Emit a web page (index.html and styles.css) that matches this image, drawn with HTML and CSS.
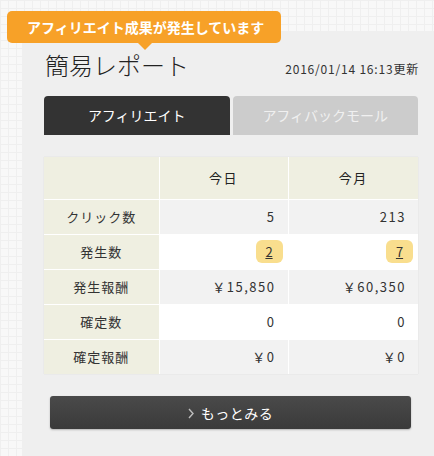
FILE: index.html
```html
<!DOCTYPE html>
<html lang="ja">
<head>
<meta charset="utf-8">
<link rel="stylesheet" href="styles.css">
</head>
<body>
<div class="page">
  <div class="tip">アフィリエイト成果が発生しています</div>
  <div class="panel">
    <div class="head">
      <h1 class="title">簡易レポート</h1>
      <span class="date">2016/01/14 16:13更新</span>
    </div>
    <div class="tabs">
      <div class="tab active">アフィリエイト</div>
      <div class="tab">アフィバックモール</div>
    </div>
    <table class="report">
      <thead>
        <tr><th class="lbl"></th><th>今日</th><th>今月</th></tr>
      </thead>
      <tbody>
        <tr class="gray"><td class="lbl">クリック数</td><td>5</td><td>213</td></tr>
        <tr class="white"><td class="lbl">発生数</td><td class="bcell"><span class="badge">2</span></td><td class="bcell"><span class="badge">7</span></td></tr>
        <tr class="gray"><td class="lbl">発生報酬</td><td>￥15,850</td><td>￥60,350</td></tr>
        <tr class="white"><td class="lbl">確定数</td><td>0</td><td>0</td></tr>
        <tr class="gray"><td class="lbl">確定報酬</td><td>￥0</td><td>￥0</td></tr>
      </tbody>
    </table>
    <div class="more"><svg class="chev" width="6" height="11" viewBox="0 0 6 11"><path d="M1 1 L5 5.5 L1 10" fill="none" stroke="#bdbdbd" stroke-width="1.4"/></svg><span>もっとみる</span></div>
  </div>
</div>
</body>
</html>
```
FILE: styles.css
```css
* { box-sizing: border-box; }
html, body { margin: 0; padding: 0; }
body {
  width: 434px;
  height: 456px;
  overflow: hidden;
  font-family: "Noto Sans CJK JP", "Noto Sans", sans-serif;
  color: #333;
  background-color: #f8f8f8;
  background-image:
    linear-gradient(to right, #efefef 1px, transparent 1px),
    linear-gradient(to bottom, #efefef 1px, transparent 1px);
  background-size: 8px 8px;
}
.page {
  position: relative;
  padding-top: 31px;
  padding-left: 22px;
}
.tip {
  position: absolute;
  left: 7px;
  top: 11px;
  width: 274px;
  height: 32px;
  background: #f7a128;
  color: #fff;
  font-weight: bold;
  font-size: 14px;
  line-height: 32px;
  padding-left: 20px;
  border-radius: 5px;
  z-index: 2;
}
.tip::after {
  content: "";
  position: absolute;
  left: 131px;
  top: 32px;
  border-left: 7px solid transparent;
  border-right: 7px solid transparent;
  border-top: 7px solid #f7a128;
}
.panel {
  background: #efefef;
  height: 425px;
  padding: 0 16px 0 22px;
}
.head {
  display: flex;
  justify-content: space-between;
  align-items: baseline;
  padding-top: 18px;
  height: 65px;
}
.title {
  margin: 0;
  font-size: 24px;
  font-weight: 300;
  line-height: 32px;
  color: #222;
  padding-left: 1px;
}
.date {
  font-size: 12px;
  color: #333;
  letter-spacing: 0.8px;
  margin-right: -1px;
  position: relative;
  top: -1px;
}
.tabs {
  display: flex;
  gap: 3px;
  height: 39px;
}
.tab {
  flex: 1;
  background: #cccccc;
  color: #f0f0f0;
  border-radius: 4px 4px 0 0;
  text-align: center;
  font-size: 14px;
  line-height: 39px;
}
.tab.active {
  background: #333333;
  color: #fff;
}
.report {
  margin-top: 22px;
  width: 374px;
  border-collapse: collapse;
  font-size: 13px;
  box-shadow: 0 0 1px rgba(0,0,0,0.12);
}
.report th {
  background: #efefe1;
  height: 42px;
  font-weight: normal;
  color: #222;
  letter-spacing: 1.5px;
  border: 1px solid #fff;
  border-top: none;
}
.report th:first-child, .report td:first-child { border-left: none; }
.report th:last-child, .report td:last-child { border-right: none; }
.report th.lbl { width: 115px; }
.report th:nth-child(2) { width: 129px; }
.report td {
  height: 35px;
  border: 1px solid #fff;
  text-align: right;
  padding: 0 12px 0 0;
  color: #333;
  letter-spacing: 1.5px;
}
.report tbody tr:last-child td { border-bottom: none; }
.report td.lbl {
  background: #efefe1;
  text-align: center;
  padding: 0;
  letter-spacing: 1px;
}
.report tr.gray td { background-color: #f2f2f2; }
.report tr.gray td.lbl, .report tr.white td.lbl { background-color: #efefe1; }
.report tr.white td { background-color: #fff; }
.report td.bcell { padding-right: 5px; letter-spacing: 0; }
.badge {
  display: inline-block;
  min-width: 27px;
  height: 23px;
  line-height: 23px;
  padding: 0 9px;
  border-radius: 6px;
  background: #f9de8e;
  text-decoration: underline;
  text-align: center;
  color: #333;
}
.more {
  margin: 22px 7px 0 6px;
  height: 33px;
  border-radius: 3px;
  background: linear-gradient(to bottom, #4a4a4a, #3a3a3a);
  box-shadow: 0 1px 2px rgba(0,0,0,0.25);
  color: #fff;
  font-size: 14px;
  letter-spacing: 0.5px;
  display: flex;
  align-items: center;
  justify-content: center;
  gap: 7px;
}
.chev { display: block; margin-top: 1px; }
```
